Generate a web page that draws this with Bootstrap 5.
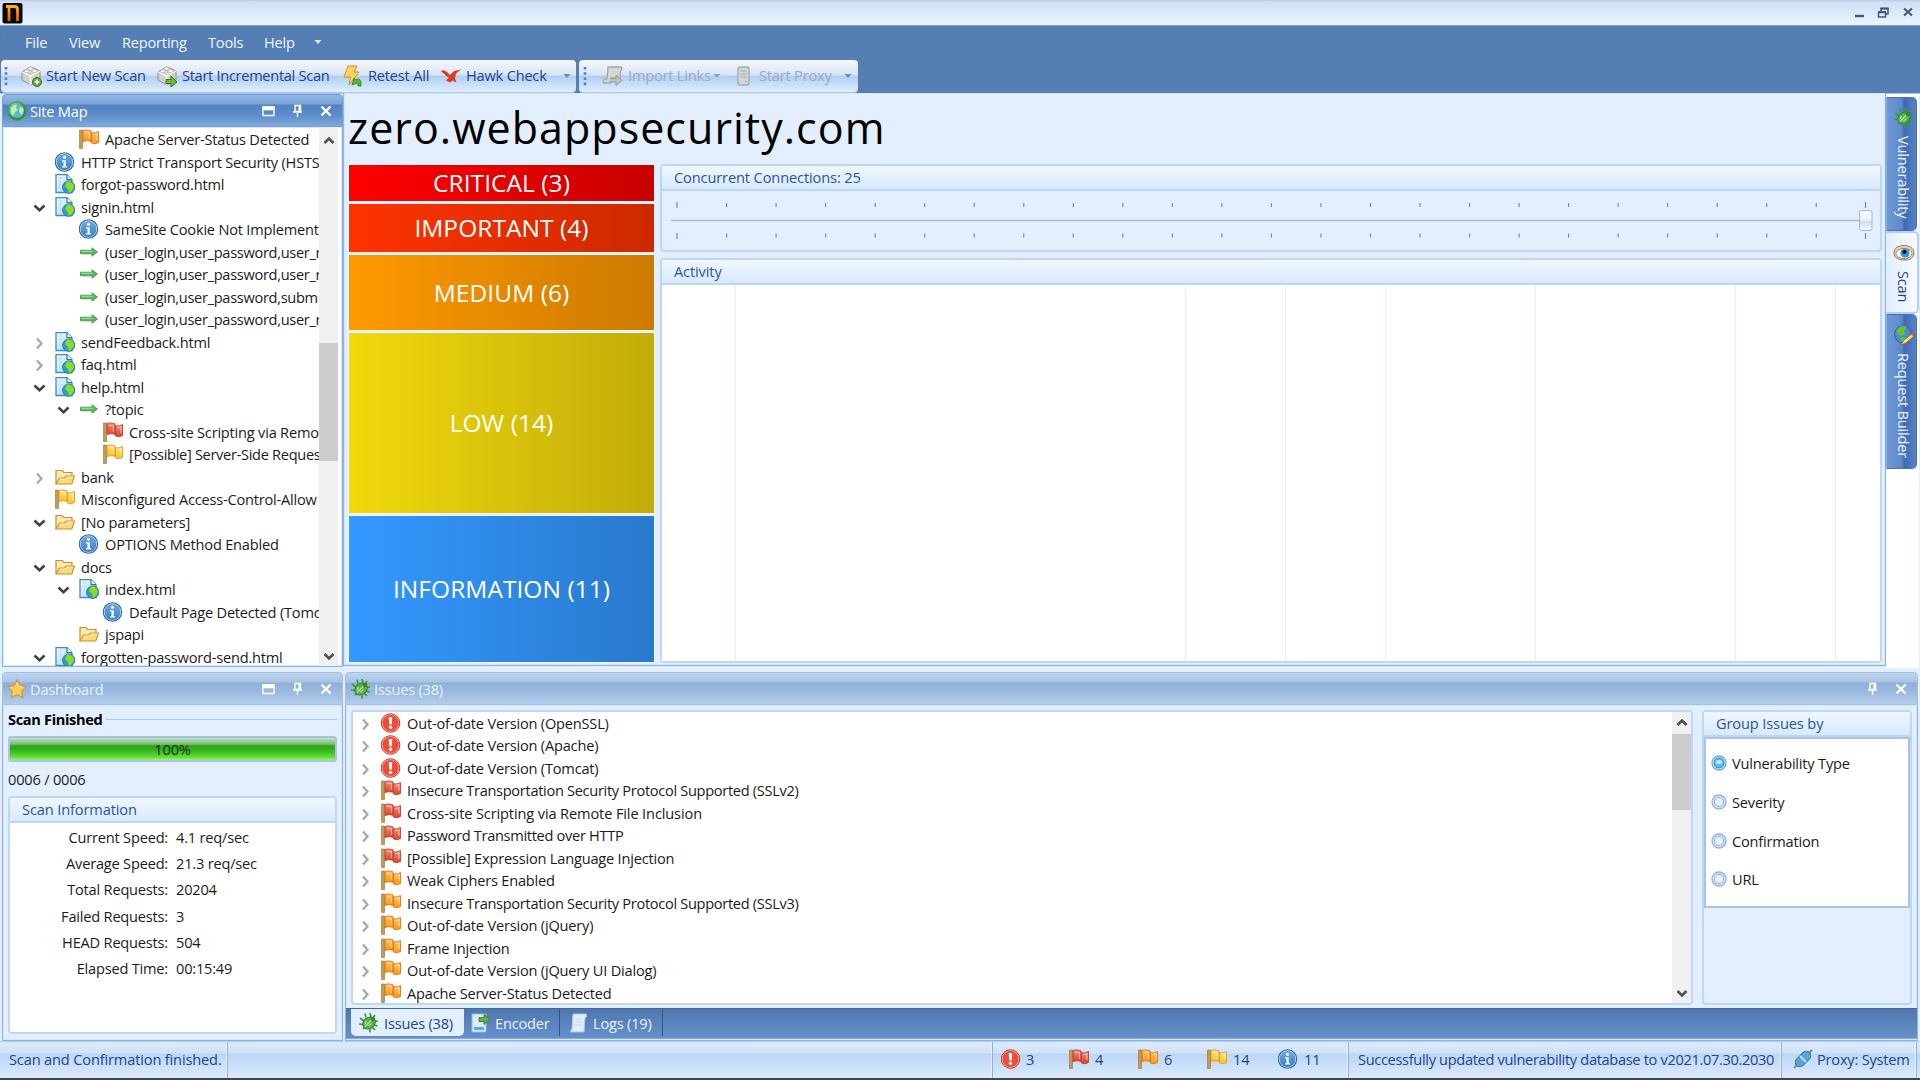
<!DOCTYPE html>
<html lang="en">
<head>
<meta charset="utf-8">
<title>Web application scanner</title>
<link href="https://cdn.jsdelivr.net/npm/bootstrap@5.3.0/dist/css/bootstrap.min.css" rel="stylesheet">
<style>
body{width:1920px;height:1080px;overflow:hidden;background:#e3efff;font-family:"Open Sans","Noto Sans",sans-serif;font-size:14.6px;letter-spacing:-.2px;line-height:22px;color:#1b1b1b;white-space:nowrap}
svg{display:block;flex:none;overflow:visible}
.ink{color:#1e4391}
.i20{width:20px;height:20px}
.titlebar{height:26px;background:linear-gradient(#bccbdd 0,#cfe0f6 2px,#dbe9fa 12px,#eef5fe 25px);border-bottom:1px solid #7aa3d8}
.menubar{height:34px;background:#547eb4;color:#eef5ff;display:grid;grid-template-columns:25px 44px 53px 86px 56px 54px 20px;align-items:center;padding-bottom:2px}
.toolzone{height:34px;background:#547eb4;padding-left:1px;gap:3px;border-bottom:1px solid #9fc2ef}
.strip{height:32px;border-radius:4px;display:grid;align-items:center;background:linear-gradient(#f4f6fa,#dbe6f4 14px,#c9dbf0 15.5px,#b0cef2 16px,#c6dffa 24px,#e0effd);box-shadow:0 1px 0 #a8c8f0}
.strip>span{margin-top:-2px}
.strip1{width:575px;grid-template-columns:20px 25px 111px 25px 162px 24px 73px 25px 96px 12px}
.strip1 .wide{letter-spacing:-.3px}
.strip2{width:279px;grid-template-columns:24px 25px 84px 25px 22px 84px 12px;color:#97acc8}
.head{height:33px;border-radius:4px 4px 0 0;border:1px solid #719fd6;color:#fff;background:linear-gradient(#93b6e2,#7aa4d8 9px,#4f83c2 10px,#5c8dca 20px,#80a9db);padding:0 6px 0 4px}
.head span{margin-left:3px}
.head.dim{color:#e8f1fc;border-color:#a3c0e6;background:linear-gradient(#c0d6ef,#a8c3e4 9px,#90b0d8 10px,#9dbbdf 20px,#b3cdec)}
.framed{border:1px solid #8db2e3;border-top:0;box-shadow:inset 0 0 0 1px #d6e6fb}
.ws{height:574px}
.tree{height:540px;background:#fff;padding-left:26px}
.tree .clipper{letter-spacing:-.21px}
.trow{height:22.5px;display:flex;align-items:center}
.trow>svg:first-child,.trow>i{width:20px;height:20px;margin-right:6px;flex:none}
.trow>svg+svg,.trow>i+svg{margin-right:6px}
.issues .trow>svg+svg{margin-right:6px}
.l1{padding-left:24px}.l2{padding-left:48px}
.clipper{width:290px;overflow:hidden;padding-top:1px}
.sbar{width:19px;background:#f0f0f0;display:flex;flex-direction:column;align-items:center}
.thumbv{background:#cdcdcd;width:100%}
.sitename{font-size:43px;line-height:52px;height:71px;padding:9px 0 0 4px;letter-spacing:1.03px;color:#000}
.sevcol{width:305px;margin-left:5px;gap:3px}
.sevcol>div{display:flex;align-items:center;justify-content:center;color:#fff;font-size:24.5px;letter-spacing:.05px;box-shadow:0 0 0 1px #f4f8fe}
.s1{height:36px;background:linear-gradient(90deg,#f00,#c80000)}
.s2{height:48px;background:linear-gradient(90deg,#ff3300,#cc2900)}
.s3{height:75px;background:linear-gradient(90deg,#ff9900,#cc7a00)}
.s4{height:180px;background:linear-gradient(90deg,#f2d90c,#c1ac09)}
.s5{height:146px;padding-bottom:1px;background:linear-gradient(90deg,#3399ff,#2979cc)}
.grp{border:2px solid #bcd7f8;border-radius:4px}
.grp>.cap{height:25px;border-bottom:2px solid #b9d5f7;background:linear-gradient(#f0f7ff,#d8e9fc);color:#2a559f;padding-left:12px;line-height:22px;letter-spacing:-.12px}
.sidetabs{width:33px;background:#fff;padding-top:3px}
.vt{writing-mode:vertical-rl;width:31px;display:flex;align-items:center;border-radius:0 5px 5px 0;color:#eef5ff;background:linear-gradient(90deg,#6f9ad4,#5e88cc 50%,#3f6bb5 60%,#5580c4 96%);border:1px solid #4973b6;border-left-color:#84a9dd;letter-spacing:-.2px;padding-left:4px}
.vt svg{margin-bottom:8px}
.vt.on{width:33px;background:linear-gradient(90deg,#e3efff,#f7faff);border:2px solid #b5cff2;border-left:0;color:#1e4391}
.bar{height:26px;border:2px solid #a5c6ec;border-radius:3px;background:linear-gradient(#c3dfc2,#7dbd74 6px,#2aa517 8px,#35b31d 12px,#63dc36 19px,#9bf56e);color:#15330f;line-height:22px;text-align:center}
.info{display:grid;grid-template-columns:142px 1fr;grid-auto-rows:26.2px;column-gap:8px;align-content:start;padding-top:3px}
.info>:nth-child(odd){text-align:right}
.tabs{height:31px;background:linear-gradient(#4e78ae,#6690cb);border-top:1px solid #45699a;border-bottom:1px solid #85aadb;color:#e8f1fd;padding-left:5px}
.tabs .act{width:113px;height:27px;background:#e3efff;border-radius:0 0 5px 5px;color:#1e4391}
.status{height:37px;border-top:1px solid #b3cdf0;background:linear-gradient(#deebfb,#cfe2f9 11px,#bdd6f6 12px,#cbe0f9 24px,#dcebfc);display:grid;grid-template-columns:228px 765px 356px 433px 135px;align-items:stretch;color:#1e4391}
.status>div{border-right:1px solid #8fb2df;box-shadow:inset -1px 0 0 #e8f2ff;display:flex;align-items:center;padding-bottom:2px}
.counts{display:grid!important;grid-template-columns:25px 43px 26px 43px 26px 43px 26px 45px 26px 40px;padding-left:8px}
#upd{letter-spacing:-.33px}
.tight{letter-spacing:-.31px}
.dark{height:2px;background:#45454c}
.opt{height:38.7px;gap:5px;padding-left:5px}
</style>
<script src="https://cdn.jsdelivr.net/npm/bootstrap@5.3.0/dist/js/bootstrap.bundle.min.js"></script>
</head>
<body class="d-flex flex-column m-0">
<svg width="0" height="0" class="position-absolute">
<defs>
<linearGradient id="gr" x2="0" y2="1"><stop stop-color="#f58a72"/><stop offset="1" stop-color="#e2422c"/></linearGradient>
<linearGradient id="go" x2="0" y2="1"><stop stop-color="#ffc054"/><stop offset="1" stop-color="#fb9a14"/></linearGradient>
<linearGradient id="gy" x2="0" y2="1"><stop stop-color="#ffe27a"/><stop offset="1" stop-color="#ffc21c"/></linearGradient>
<linearGradient id="gb" x2="0" y2="1"><stop stop-color="#6fa9dc"/><stop offset="1" stop-color="#3a80c6"/></linearGradient>
<radialGradient id="gg" cx=".4" cy=".35"><stop stop-color="#d5f5d5"/><stop offset=".6" stop-color="#5fbf62"/><stop offset="1" stop-color="#2d8f3c"/></radialGradient>
<linearGradient id="gpg" x2="1" y2="1"><stop stop-color="#f2fafd"/><stop offset="1" stop-color="#a8d4ea"/></linearGradient>
<symbol id="flagbase" viewBox="0 0 20 20"><path d="M.5 1h3v18.500h-3z" fill="#c39a50" stroke="#94713a" stroke-width=".6"/><path d="M4 1.500c3-1 5-.5 8 .3v10.500c-3-.7-5-.8-8 .2z" /><path d="M12.500 3.500c2.500 1.200 5-.2 7-1v11c-2 1-4.500 1.800-7 .5z"/><path d="M6 3.500c2-.5 3 0 4.500.3v6M14.200 5.500l3.700-.8v6" stroke="#fff" stroke-opacity=".5" fill="none" stroke-width="1.200"/></symbol>
<symbol id="fr" viewBox="0 0 20 20"><use href="#flagbase" fill="url(#gr)" stroke="#b93528" stroke-width=".8"/></symbol>
<symbol id="fo" viewBox="0 0 20 20"><use href="#flagbase" fill="url(#go)" stroke="#dc6a10" stroke-width=".8"/></symbol>
<symbol id="fy" viewBox="0 0 20 20"><use href="#flagbase" fill="url(#gy)" stroke="#e0901c" stroke-width=".8"/></symbol>
<symbol id="inf" viewBox="0 0 20 20"><circle cx="9.500" cy="10" r="9.200" fill="#d6e8f8" stroke="#2c68ae" stroke-width="1.100"/><circle cx="9.500" cy="10" r="8" fill="url(#gb)"/><circle cx="9.500" cy="5.200" r="1.500" fill="#fff"/><path d="M7 8.200h3.700v6h1.500v1.300H7v-1.300h1.500V9.500H7z" fill="#fff"/></symbol>
<symbol id="crit" viewBox="0 0 20 20"><circle cx="9.500" cy="10" r="9.300" fill="#f8b4a8" stroke="#c63a2c" stroke-width="1"/><circle cx="9.500" cy="10" r="8" fill="#ee4b38"/><path d="M7.700 4h3.600l-.6 7.500H8.300z" fill="#fff"/><circle cx="9.500" cy="14.300" r="1.700" fill="#fff"/></symbol>
<symbol id="page" viewBox="0 0 20 20"><path d="M1 .7h11l5 5V18.500H1z" fill="url(#gpg)" stroke="#3790bd" stroke-width="1.300"/><path d="M3.500 4h4M3.500 8h4M3.500 12h3M5 2v15" stroke="#c1e0ee" stroke-width="1"/><path d="M12 .7v5h5" fill="#fff" stroke="#237cb0" stroke-width="1.200"/><circle cx="13.700" cy="13.200" r="6.200" fill="#2f9bd6" stroke="#16689c" stroke-width=".7"/><path d="M12 7.500c4-.5 7 2 7 5.500l-2 4-3 2-1-4-3-3z" fill="#8fdc1c"/><path d="M9 16l3 1 .5 2z" fill="#47b437"/></symbol>
<symbol id="fold" viewBox="0 0 20 20"><path d="M1 17V3.500h6l2 2h8v3" fill="#ffe9ac" stroke="#c78f32" stroke-width="1.200"/><path d="M1 17l3.500-6h5l2-2h8l-2.700 8z" fill="#ffd876" stroke="#c78f32" stroke-width="1.100"/><path d="M5.200 12.200H10l2-2h5.600" stroke="#fff4cf" fill="none"/></symbol>
<symbol id="arr" viewBox="0 0 20 20"><path d="M1.500 8.200h11.500V5.800L18.500 10 13 14.200v-2.400H1.500z" fill="#5cb860" stroke="#3d9145" stroke-width=".8"/><path d="M2.500 9.300h11" stroke="#a7e2a5"/></symbol>
<symbol id="cd" viewBox="0 0 20 20"><path d="M5.500 8.500l5 4.700 5-4.700" fill="none" stroke="#404040" stroke-width="2.500"/></symbol>
<symbol id="cr" viewBox="0 0 20 20"><path d="M8 6.500l4.500 5-4.500 5" fill="none" stroke="#a9a9a9" stroke-width="2.300"/></symbol>
<symbol id="su" viewBox="0 0 20 20"><path d="M5.500 13l4.500-4.500 4.500 4.500" fill="none" stroke="#505050" stroke-width="2.600"/></symbol>
<symbol id="sd" viewBox="0 0 20 20"><path d="M5.500 8l4.500 4.500 4.500-4.500" fill="none" stroke="#505050" stroke-width="2.600"/></symbol>
<symbol id="bug" viewBox="0 0 20 20"><path d="M1 5l4 3M0 11l4 .5M6 .5l1 4M11 0l1 4M16 2l-2 3M19 8l-4 .5M18.500 13l-3.500-1M16 17l-3-3M11 19.500l0-4M4 16l3-2" stroke="#3f9a3a" stroke-width="1.700" fill="none"/><ellipse cx="10" cy="10" rx="6.800" ry="5.500" transform="rotate(-38 10 10)" fill="#58ad4d" stroke="#2f8430"/><path d="M6 13.500L14 5.500M7.500 8l-1.200 3M12.500 10.500l-3 2.700" stroke="#a9e393" stroke-width="1.500"/><circle cx="14" cy="6" r="2.300" fill="#2f8a31"/></symbol>
<symbol id="globe" viewBox="0 0 20 20"><circle cx="10" cy="10" r="9.300" fill="url(#gg)" stroke="#3d9c45"/><circle cx="10" cy="10" r="7" fill="#62b3cf"/><path d="M4 7c2-3 4-3.500 6-3.500L9 7l2 2-3 2-2 4c-2-2-3-4-2-8zM13 6l3 1c1 3 .5 5-2 7l-2-4z" fill="#bdf0ad"/></symbol>
<symbol id="star" viewBox="0 0 20 20"><path d="M10 .8l2.800 6 6.500.8-4.800 4.500 1.300 6.500L10 15.500l-5.800 3.100 1.300-6.500L.7 7.600l6.500-.8z" fill="#ffcf5a" stroke="#dc922b" stroke-width="1.100"/><path d="M10 3.500l1.900 4.200 4 .5" stroke="#fff0b8" fill="none"/></symbol>
<symbol id="win" viewBox="0 0 20 20"><path d="M3 6h11v8.500H3z" fill="none" stroke="#fff" stroke-width="1.300"/><path d="M2.500 5.300h12v4h-12z" fill="#fff"/></symbol>
<symbol id="pin" viewBox="0 0 20 20"><path d="M7 4.500h5.500v6H7zM5 11h9M9.500 11v5M11.200 5v6" fill="none" stroke="#fff" stroke-width="1.400"/></symbol>
<symbol id="xx" viewBox="0 0 20 20"><path d="M5.500 5.500l9 9M14.500 5.500l-9 9" stroke="#fff" stroke-width="2.400"/></symbol>
<symbol id="grip" viewBox="0 0 10 20"><path d="M5 1v19" stroke="#5b80b8" stroke-width="2.600" stroke-dasharray="2.600 2.600"/></symbol>
<symbol id="tri" viewBox="0 0 10 10"><path d="M1.500 3h7L5 7z"/></symbol>
<symbol id="cube" viewBox="0 0 20 20"><path d="M1 6l5-3 3-2 4 1 6 3v9l-9 5-9-5z" fill="#d2d2cd" stroke="#92928b"/><path d="M1 6l8.500 4L19 5M9.500 10v9" stroke="#f9f9f6" fill="none" stroke-width="1.300"/><ellipse cx="6" cy="5.200" rx="2.600" ry="1.500" fill="#fff" stroke="#a4a49e" stroke-width=".6"/><ellipse cx="13.500" cy="5" rx="2.600" ry="1.500" fill="#fff" stroke="#a4a49e" stroke-width=".6"/><ellipse cx="9.500" cy="2.500" rx="2.400" ry="1.300" fill="#fff" stroke="#a4a49e" stroke-width=".6"/></symbol>
</defs></svg>

<header class="titlebar d-flex justify-content-between align-items-center">
  <svg width="22" height="22" viewBox="0 0 22 22" class="brandmark"><defs><linearGradient id="nl" gradientUnits="userSpaceOnUse" x1="0" y1="2" x2="0" y2="19"><stop stop-color="#ffc400"/><stop offset="1" stop-color="#f0521a"/></linearGradient></defs><rect x="2.500" y="1" width="20" height="20.500" rx="2" fill="#080808"/><path d="M6 4.500h8.500q3 0 3 3V19M9 4.500V19" fill="none" stroke="url(#nl)" stroke-width="2.800"/></svg>
  <svg width="70" height="20" viewBox="0 0 70 20" fill="none" stroke="#44587c" stroke-width="1.500"><path d="M5 13h9" stroke-width="2.400"/><path d="M28.500 9.500h7v4.500h-7zM31 8V5.500h7V11H36"/><path d="M28 9h8M30.500 5.500h8" stroke-width="2"/><path d="M54 5.500l8 7M62 5.500l-8 7" stroke-width="2.200"/></svg>
</header>
<nav class="menubar">
  <svg width="10" height="20"><use href="#grip"/></svg><span>File</span><span>View</span><span>Reporting</span><span>Tools</span><span>Help</span><svg width="10" height="10" fill="#dceafc" style="margin-left:-5px"><use href="#tri"/></svg>
</nav>
<div class="toolzone d-flex">
  <div class="strip strip1 ink">
    <svg width="10" height="20"><use href="#grip"/></svg>
    <svg class="i20"><use href="#cube"/><circle cx="16" cy="16" r="4.500" fill="#5ea83d" stroke="#38761f"/><path d="M16 13.500v5M13.500 16h5" stroke="#fff" stroke-width="1.500"/></svg><span>Start New Scan</span>
    <svg class="i20"><use href="#cube"/><path d="M9 13.500h5V10l6 6-6 5v-3.500H9z" fill="#70b83e" stroke="#38761f"/></svg><span class="wide">Start Incremental Scan</span>
    <svg class="i20" viewBox="0 0 20 20"><path d="M4 0h9l-3 6h5L5 19l1.500-8H0z" fill="#ffd45b" stroke="#d58d27"/><path d="M8 19l2-7 2 2c2-2 4-1 5 2v4h-3v-3l-2 .5z" fill="#5cb234" stroke="#347a22" stroke-width=".8"/></svg><span>Retest All</span>
    <svg class="i20" viewBox="0 0 20 20"><path d="M0 5.500l2-1.500 4 2 3 3 4-4 7-1.500-5 4-1 5 1.500 4-4-2-2.500 2-4-2 3-3-3-1.500L3.500 8z" fill="#df3a1d"/></svg><span>Hawk Check</span>
    <svg width="10" height="10" fill="#6d8db8"><use href="#tri"/></svg>
  </div>
  <div class="strip strip2">
    <svg width="10" height="20" style="margin-left:1px"><use href="#grip"/></svg>
    <svg class="i20" viewBox="0 0 20 20"><path d="M5 1h13q2 2-.5 4L17 12H8l-1 5H1q-2-3 1-4h2z" fill="#d5d6d6" stroke="#a5a8aa" stroke-width="1.300"/><path d="M8 12.500h5V9l6 5.500-6 5V16H6" fill="#bfc1c1" stroke="#999c9e"/></svg><span>Import Links</span>
    <svg width="10" height="10" fill="#8ca4c5"><use href="#tri"/></svg>
    <svg class="i20" viewBox="0 0 20 20"><rect x="1" y="1" width="11" height="18" rx="2" fill="#d3d6d8" stroke="#a9adb0" stroke-width="1.500"/><path d="M3.500 5h6M3.500 8h6M3.500 11h6M8 15.500h2" stroke="#a9adb0" stroke-width="1.200"/></svg><span>Start Proxy</span>
    <svg width="10" height="10" fill="#6d8db8"><use href="#tri"/></svg>
  </div>
</div>

<div class="ws d-flex">
  <aside style="width:341px;margin-left:2px">
    <div class="head d-flex align-items-center"><svg class="i20"><use href="#globe"/></svg><span class="flex-grow-1">Site Map</span><svg class="i20"><use href="#win"/></svg><svg class="i20 mx-2"><use href="#pin"/></svg><svg class="i20"><use href="#xx"/></svg></div>
    <div class="framed tree d-flex">
      <div class="clipper">
        <div class="trow l1"><i></i><svg class="i20"><use href="#fo"/></svg>Apache Server-Status Detected</div>
        <div class="trow"><i></i><svg class="i20"><use href="#inf"/></svg>HTTP Strict Transport Security (HSTS)</div>
        <div class="trow"><i></i><svg class="i20"><use href="#page"/></svg>forgot-password.html</div>
        <div class="trow"><svg><use href="#cd"/></svg><svg class="i20"><use href="#page"/></svg>signin.html</div>
        <div class="trow l1"><i></i><svg class="i20"><use href="#inf"/></svg>SameSite Cookie Not Implement</div>
        <div class="trow l1"><i></i><svg class="i20"><use href="#arr"/></svg><span class="tight">(user_login,user_password,user_r</span></div>
        <div class="trow l1"><i></i><svg class="i20"><use href="#arr"/></svg><span class="tight">(user_login,user_password,user_r</span></div>
        <div class="trow l1"><i></i><svg class="i20"><use href="#arr"/></svg><span class="tight">(user_login,user_password,subm</span></div>
        <div class="trow l1"><i></i><svg class="i20"><use href="#arr"/></svg><span class="tight">(user_login,user_password,user_r</span></div>
        <div class="trow"><svg><use href="#cr"/></svg><svg class="i20"><use href="#page"/></svg>sendFeedback.html</div>
        <div class="trow"><svg><use href="#cr"/></svg><svg class="i20"><use href="#page"/></svg>faq.html</div>
        <div class="trow"><svg><use href="#cd"/></svg><svg class="i20"><use href="#page"/></svg>help.html</div>
        <div class="trow l1"><svg><use href="#cd"/></svg><svg class="i20"><use href="#arr"/></svg>?topic</div>
        <div class="trow l2"><i></i><svg class="i20"><use href="#fr"/></svg>Cross-site Scripting via Remo</div>
        <div class="trow l2"><i></i><svg class="i20"><use href="#fy"/></svg><span class="tight">[Possible] Server-Side Reques</span></div>
        <div class="trow"><svg><use href="#cr"/></svg><svg class="i20"><use href="#fold"/></svg>bank</div>
        <div class="trow"><i></i><svg class="i20"><use href="#fy"/></svg>Misconfigured Access-Control-Allow</div>
        <div class="trow"><svg><use href="#cd"/></svg><svg class="i20"><use href="#fold"/></svg>[No parameters]</div>
        <div class="trow l1"><i></i><svg class="i20"><use href="#inf"/></svg>OPTIONS Method Enabled</div>
        <div class="trow"><svg><use href="#cd"/></svg><svg class="i20"><use href="#fold"/></svg>docs</div>
        <div class="trow l1"><svg><use href="#cd"/></svg><svg class="i20"><use href="#page"/></svg>index.html</div>
        <div class="trow l2"><i></i><svg class="i20"><use href="#inf"/></svg>Default Page Detected (Tomc</div>
        <div class="trow l1"><i></i><svg class="i20"><use href="#fold"/></svg>jspapi</div>
        <div class="trow"><svg><use href="#cd"/></svg><svg class="i20"><use href="#page"/></svg>forgotten-password-send.html</div>
      </div>
      <div class="sbar"><svg class="i20" style="margin-top:3px"><use href="#su"/></svg><div class="thumbv" style="height:118px;margin-top:193px"></div><svg class="i20 mt-auto"><use href="#sd"/></svg></div>
    </div>
  </aside>

  <main class="framed d-flex flex-column" style="width:1543px;height:573px;margin-top:-1px">
    <div class="sitename">zero.webappsecurity.com</div>
    <div class="d-flex" style="gap:6px">
      <div class="sevcol d-flex flex-column" style="padding-top:1px">
        <div class="s1">CRITICAL (3)</div><div class="s2">IMPORTANT (4)</div><div class="s3">MEDIUM (6)</div><div class="s4">LOW (14)</div><div class="s5">INFORMATION (11)</div>
      </div>
      <div class="d-flex flex-column" style="gap:6px;width:1222px">
        <div class="grp" style="height:88px"><div class="cap">Concurrent Connections: 25</div>
          <svg width="1218" height="59" viewBox="0 0 1218 59" id="slider"><path d="M9 29.500h1200" stroke="#a9bed8" stroke-width="1.500"/><path d="M15 11v6M15 42v6M1203.500 11v6M1203.500 42v6" stroke="#6790c6" stroke-width="1.200"/><path d="M64 14h1100M64 44.500h1100" stroke="#6790c6" stroke-width="4" stroke-dasharray="1.200 48.330"/><linearGradient id="th" x2="0" y2="1"><stop stop-color="#fff"/><stop offset=".5" stop-color="#e8eff7"/><stop offset=".55" stop-color="#cbdcee"/><stop offset="1" stop-color="#f8fbff"/></linearGradient><rect x="1197.500" y="19.500" width="12.500" height="20" rx="2" fill="url(#th)" stroke="#9fb8d6"/></svg>
        </div>
        <div class="grp" style="height:405px"><div class="cap">Activity</div>
          <svg width="1218" height="376" class="bg-white"><path d="M73.500 0v376M523.500 0v376M623.500 0v376M723.500 0v376M873.500 0v376M1073.500 0v376M1173.500 0v376" stroke="#e6f0fd" stroke-width="1.200"/></svg>
        </div>
      </div>
    </div>
  </main>
  <nav class="sidetabs">
    <div class="vt" style="height:134px;padding-top:10px"><svg class="i20"><use href="#bug"/></svg>Vulnerability</div>
    <div class="vt on" style="height:83px;padding-top:10px"><svg class="i20" viewBox="0 0 20 20"><path d="M0 10C0 5 4 3 9 2.500 16 2 20 6 20 10c0 5-4 7-9 7S0 16 0 10z" fill="#f3cba7" stroke="#9c7658"/><ellipse cx="10" cy="10.500" rx="8" ry="5" fill="#fff" stroke="#775a48" stroke-width=".7"/><circle cx="11" cy="10" r="4.600" fill="#2f9ae0"/><circle cx="10.500" cy="9" r="2" fill="#111"/></svg>Scan</div>
    <div class="vt" style="height:155px;padding-top:10px"><svg class="i20" viewBox="0 0 20 20"><circle cx="9" cy="9.500" r="8.500" fill="#4a87d4" stroke="#315f98"/><path d="M2 6c3-5 7-6 11-4l-3 4 1 4-5 1zM5 13l5-1 3 3-3 3z" fill="#64c03b"/><path d="M19 8l-9 7-3 5 5-2 8-7z" fill="#ffe36e" stroke="#7a622e" stroke-width=".8"/><path d="M17 9.500l3 2 1-2-2-2.500z" fill="#dd4b3b"/></svg>Request Builder</div>
  </nav>
</div>

<div class="d-flex" style="height:373px;padding-top:4px">
  <aside class="d-flex flex-column" style="width:341px;margin-left:2px">
    <div class="head dim d-flex align-items-center"><svg class="i20"><use href="#star"/></svg><span class="flex-grow-1">Dashboard</span><svg class="i20"><use href="#win"/></svg><svg class="i20 mx-2"><use href="#pin"/></svg><svg class="i20"><use href="#xx"/></svg></div>
    <div class="framed flex-grow-1 d-flex flex-column" style="padding:3px 5px 6px 5px">
      <div class="d-flex align-items-center fw-bold text-black" id="fin"><span style="letter-spacing:-.35px">Scan Finished</span><span class="flex-grow-1 ms-1" style="border-top:1px solid #abc7e8"></span></div>
      <div class="bar" style="margin-top:6px">100%</div>
      <div style="height:34px;line-height:34px">0006 / 0006</div>
      <div class="grp flex-grow-1 d-flex flex-column bg-white"><div class="cap">Scan Information</div>
        <div class="info" style="margin-left:16px"><span>Current Speed:</span><span>4.1 req/sec</span><span>Average Speed:</span><span>21.3 req/sec</span><span>Total Requests:</span><span>20204</span><span>Failed Requests:</span><span>3</span><span>HEAD Requests:</span><span>504</span><span>Elapsed Time:</span><span>00:15:49</span></div>
      </div>
    </div>
  </aside>
  <section class="d-flex flex-column" style="width:1573px;margin-left:2px">
    <div class="head dim d-flex align-items-center"><svg class="i20" style="margin-left:1px"><use href="#bug"/></svg><span class="flex-grow-1" style="margin-left:3px">Issues (38)</span><svg class="i20 me-2"><use href="#pin"/></svg><svg class="i20"><use href="#xx"/></svg></div>
    <div class="framed d-flex flex-column flex-grow-1">
      <div class="d-flex" style="padding:5px 5px 3px 5px;gap:9px;height:303px">
        <div class="grp bg-white d-flex justify-content-between overflow-hidden" style="width:1342px">
          <div class="issues" style="margin-top:-.5px;padding-left:2px">
            <div class="trow"><svg><use href="#cr"/></svg><svg class="i20"><use href="#crit"/></svg>Out-of-date Version (OpenSSL)</div>
            <div class="trow"><svg><use href="#cr"/></svg><svg class="i20"><use href="#crit"/></svg>Out-of-date Version (Apache)</div>
            <div class="trow"><svg><use href="#cr"/></svg><svg class="i20"><use href="#crit"/></svg>Out-of-date Version (Tomcat)</div>
            <div class="trow"><svg><use href="#cr"/></svg><svg class="i20"><use href="#fr"/></svg><span class="tight">Insecure Transportation Security Protocol Supported (SSLv2)</span></div>
            <div class="trow"><svg><use href="#cr"/></svg><svg class="i20"><use href="#fr"/></svg><span style="letter-spacing:-.13px">Cross-site Scripting via Remote File Inclusion</span></div>
            <div class="trow"><svg><use href="#cr"/></svg><svg class="i20"><use href="#fr"/></svg><span class="tight">Password Transmitted over HTTP</span></div>
            <div class="trow"><svg><use href="#cr"/></svg><svg class="i20"><use href="#fr"/></svg>[Possible] Expression Language Injection</div>
            <div class="trow"><svg><use href="#cr"/></svg><svg class="i20"><use href="#fo"/></svg>Weak Ciphers Enabled</div>
            <div class="trow"><svg><use href="#cr"/></svg><svg class="i20"><use href="#fo"/></svg><span class="tight">Insecure Transportation Security Protocol Supported (SSLv3)</span></div>
            <div class="trow"><svg><use href="#cr"/></svg><svg class="i20"><use href="#fo"/></svg>Out-of-date Version (jQuery)</div>
            <div class="trow"><svg><use href="#cr"/></svg><svg class="i20"><use href="#fo"/></svg>Frame Injection</div>
            <div class="trow"><svg><use href="#cr"/></svg><svg class="i20"><use href="#fo"/></svg>Out-of-date Version (jQuery UI Dialog)</div>
            <div class="trow"><svg><use href="#cr"/></svg><svg class="i20"><use href="#fo"/></svg>Apache Server-Status Detected</div>
          </div>
          <div class="sbar"><svg class="i20"><use href="#su"/></svg><div class="thumbv" style="height:76px;margin-top:2px"></div><svg class="i20 mt-auto"><use href="#sd"/></svg></div>
        </div>
        <div class="grp flex-grow-1"><div class="cap">Group Issues by</div>
          <div class="bg-white" style="height:171px;border:2px solid #a9c4e6;padding-top:5px" id="opts">
            <div class="opt d-flex align-items-center"><svg width="16" height="16"><circle cx="8" cy="8" r="7" fill="#d6e8fc" stroke="#7fa6da" stroke-width="1.300"/><circle cx="8" cy="8" r="5" fill="#58bdf2" stroke="#2b8ad0"/><ellipse cx="8" cy="7" rx="3" ry="2" fill="#bfeaff"/></svg>Vulnerability Type</div>
            <div class="opt d-flex align-items-center"><svg width="16" height="16"><circle cx="8" cy="8" r="7" fill="#d6e8fc" stroke="#94b3e0" stroke-width="1.300"/><circle cx="8" cy="8" r="4.700" fill="#e9f3fe" stroke="#8caee0"/></svg>Severity</div>
            <div class="opt d-flex align-items-center"><svg width="16" height="16"><circle cx="8" cy="8" r="7" fill="#d6e8fc" stroke="#94b3e0" stroke-width="1.300"/><circle cx="8" cy="8" r="4.700" fill="#e9f3fe" stroke="#8caee0"/></svg>Confirmation</div>
            <div class="opt d-flex align-items-center"><svg width="16" height="16"><circle cx="8" cy="8" r="7" fill="#d6e8fc" stroke="#94b3e0" stroke-width="1.300"/><circle cx="8" cy="8" r="4.700" fill="#e9f3fe" stroke="#8caee0"/></svg>URL</div>
          </div>
        </div>
      </div>
      <div class="tabs d-flex">
        <div class="act d-flex align-items-center ps-2"><svg class="i20"><use href="#bug"/></svg><span style="margin-left:5px">Issues (38)</span></div>
        <div class="d-flex align-items-center" style="width:96px;height:27px;border-right:1px solid #31578d"><svg class="i20" viewBox="0 0 20 20" style="margin:0 4px 0 7px"><path d="M1 1h14v18H1z" fill="#ddecf8" stroke="#8fb8dc"/><path d="M3 14h10v3H3z" fill="#5da8e3"/><path d="M8 4.500h5V1.500l6 5-6 5v-3H8z" fill="#62b04b" stroke="#33752e" stroke-width=".8"/></svg>Encoder</div>
        <div class="d-flex align-items-center" style="width:103px;height:27px;border-right:1px solid #31578d"><svg class="i20" viewBox="0 0 20 20" style="margin:0 4px 0 9px"><path d="M4 1h13q2 2-1 4l-1 14H1q1-2 2-3z" fill="#e2effc" stroke="#a7c7ea"/><path d="M6 6h8M6 9h7M5 12h8" stroke="#bdd7f2"/></svg>Logs (19)</div>
      </div>
    </div>
  </section>
</div>
<footer class="status mt-auto">
  <div style="padding-left:9px;letter-spacing:-.15px">Scan and Confirmation finished.</div><div></div>
  <div class="counts"><svg class="i20"><use href="#crit"/></svg><span>3</span><svg class="i20"><use href="#fr"/></svg><span>4</span><svg class="i20"><use href="#fo"/></svg><span>6</span><svg class="i20"><use href="#fy"/></svg><span>14</span><svg class="i20"><use href="#inf"/></svg><span>11</span></div>
  <div style="padding-left:9px"><span id="upd">Successfully updated vulnerability database to v2021.07.30.2030</span></div>
  <div style="padding-left:12px"><svg width="18" height="18" viewBox="0 0 18 18" style="margin-right:5px"><path d="M0 18l4-4M14 4l4-4" stroke="#a48056" stroke-width="2"/><rect x="0" y="4.500" width="18" height="9" rx="4.500" transform="rotate(-45 9 9)" fill="#57a6da" stroke="#2b73ab"/><path d="M6 6l6 6" stroke="#d7efff" stroke-width="1.600"/></svg>Proxy: System</div>
</footer>
<div class="dark"></div>
</body>
</html>
